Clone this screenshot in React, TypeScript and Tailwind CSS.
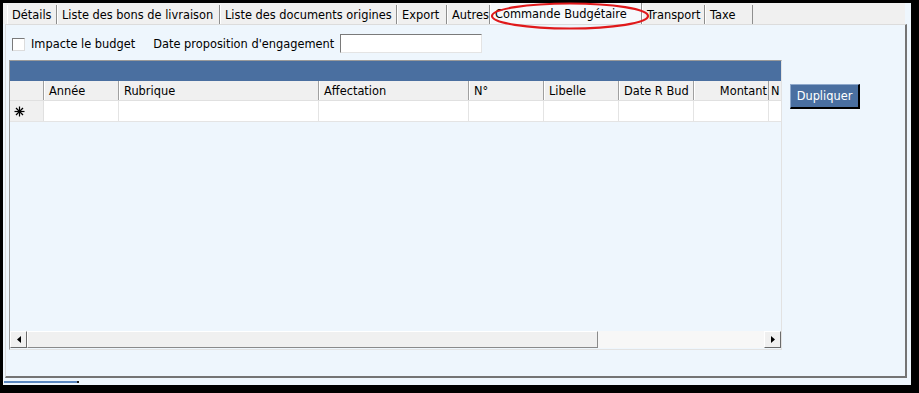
const tabs = [
  { label: 'Détails', w: 'w-[50px]' },
  { label: 'Liste des bons de livraison', w: 'w-[163px]' },
  { label: 'Liste des documents origines', w: 'w-[177px]' },
  { label: 'Export', w: 'w-[50px]' },
  { label: 'Autres', w: 'w-[43px]' },
  { label: 'Commande Budgétaire', w: 'w-[152px]', active: true },
  { label: 'Transport', w: 'w-[63px]' },
  { label: 'Taxe', w: 'w-[48px]' },
];

const cols = [
  { label: 'Année', w: 'w-[75px]' },
  { label: 'Rubrique', w: 'w-[200px]' },
  { label: 'Affectation', w: 'w-[150px]' },
  { label: 'N°', w: 'w-[75px]' },
  { label: 'Libelle', w: 'w-[75px]' },
  { label: 'Date R Bud', w: 'w-[75px]' },
  { label: 'Montant', w: 'w-[75px]', right: true },
];

function Star() {
  return (
    <svg width="11" height="11" viewBox="0 0 11 11" stroke="black" strokeWidth="1.2">
      <line x1="5.5" y1="0.5" x2="5.5" y2="10.5" />
      <line x1="0.5" y1="5.5" x2="10.5" y2="5.5" />
      <line x1="2" y1="2" x2="9" y2="9" />
      <line x1="9" y1="2" x2="2" y2="9" />
    </svg>
  );
}

export default function App() {
  return (
    <div className="w-[919px] h-[393px] bg-black pt-[3px] pl-[3px] font-['DejaVu_Sans',sans-serif] text-[11.4px] text-black">
      <div className="relative w-[908px] h-[382px] bg-[#eef6fd] flex flex-col">
        {/* tab strip */}
        <div className="flex items-end h-[21px] w-[902px] bg-[#f0f0f0] pl-[4px]">
          {tabs.map((t) => (
            <div
              key={t.label}
              className={`${t.w} flex items-center pl-[4px] pt-[3px] whitespace-nowrap overflow-hidden border-l border-l-white border-r border-r-[#8e8e8e] ${
                t.active ? 'h-[21px] bg-[#f6f9fc]' : 'h-[19px] bg-[#f0f0f0]'
              }`}
            >
              {t.label}
            </div>
          ))}
        </div>

        {/* panel */}
        <div className="ml-[2px] w-[902px] h-[354px] border-l border-t border-l-[#dcdcdc] border-t-[#dcdcdc] border-r-2 border-b-2 border-r-[#747474] border-b-[#747474] bg-[#eef6fd]">
          <div className="flex items-center h-[19px] mt-[9px] pl-[6px]">
            <div className="w-[13px] h-[13px] bg-white border border-t-[#7a7a7a] border-l-[#7a7a7a] border-r-[#dcdcdc] border-b-[#dcdcdc] mt-[2px]" />
            <span className="ml-[6px] pt-[3px]">Impacte le budget</span>
            <span className="ml-[18px] pt-[3px]">Date proposition d'engagement</span>
            <div className="ml-[6px] w-[142px] h-[19px] bg-white border border-t-[#7a7a7a] border-l-[#7a7a7a] border-r-[#e4e4e4] border-b-[#e4e4e4]" />
          </div>

          <div className="flex mt-[7px] ml-[3px]">
            {/* grid */}
            <div className="w-[773px] h-[290px] flex flex-col border border-t-[#9a9a9a] border-l-[#9a9a9a] border-r-[#e2e2e2] border-b-[#e2e2e2] bg-[#eef6fd]">
              <div className="h-[20px] bg-[#4a6fa0]" />
              <div className="flex h-[20px] bg-[#f0f0f0] border-b border-b-[#e0e0e0]">
                <div className="w-[34px] border-r border-r-[#a0a0a0]" />
                {cols.map((c) => (
                  <div
                    key={c.label}
                    className={`${c.w} flex items-center pt-[3px] border-l border-l-white border-r border-r-[#a0a0a0] whitespace-nowrap overflow-hidden ${
                      c.right ? 'justify-end pr-[1px]' : 'pl-[4px]'
                    }`}
                  >
                    {c.label}
                  </div>
                ))}
                <div className="flex-1 flex items-center pt-[3px] pl-[2px] overflow-hidden">N</div>
              </div>
              <div className="flex h-[21px] bg-white border-b border-b-[#e4e4e4]">
                <div className="w-[34px] bg-[#f0f0f0] flex items-center pl-[4px] border-r border-r-[#e0e0e0]">
                  <Star />
                </div>
                {cols.map((c) => (
                  <div key={c.label} className={`${c.w} border-r border-r-[#e4e4e4]`} />
                ))}
                <div className="flex-1" />
              </div>
              <div className="flex-1" />
              {/* horizontal scrollbar */}
              <div className="flex h-[17px] mb-[1px] bg-[#f4f4f4]">
                <div className="w-[17px] flex items-center justify-center bg-[#f0f0f0] border border-t-white border-l-white border-r-[#6b6b6b] border-b-[#6b6b6b]">
                  <svg width="4" height="7" viewBox="0 0 4 7"><polygon points="4,0 4,7 0,3.5" fill="black" /></svg>
                </div>
                <div className="w-[571px] bg-[#f0f0f0] border border-t-white border-l-white border-r-[#8a8a8a] border-b-[#8a8a8a]" />
                <div className="flex-1 bg-[#f7f7f7]" />
                <div className="w-[17px] flex items-center justify-center bg-[#f0f0f0] border border-t-white border-l-white border-r-[#6b6b6b] border-b-[#6b6b6b]">
                  <svg width="4" height="7" viewBox="0 0 4 7"><polygon points="0,0 0,7 4,3.5" fill="black" /></svg>
                </div>
              </div>
            </div>

            <div className="ml-[8px] mt-[24px]">
              <button className="w-[70px] h-[25px] pt-[2px] bg-[#4a6fa0] text-white border border-t-[#8fa9cc] border-l-[#8fa9cc] border-r-2 border-b-2 border-r-black border-b-black">
                Dupliquer
              </button>
            </div>
          </div>
        </div>

        <div className="mt-[3px] ml-[1px] w-[75px] h-[2px] bg-[#5b87c0] border-r-2 border-r-[#1a1a1a]" />

        {/* annotation ellipse over the active tab */}
        <svg className="absolute left-[485px] top-[-2px] pointer-events-none" width="164" height="30" viewBox="0 0 164 30">
          <ellipse cx="82" cy="15" rx="78" ry="12.5" fill="none" stroke="#e0191b" strokeWidth="2.2" />
        </svg>
      </div>
    </div>
  );
}
